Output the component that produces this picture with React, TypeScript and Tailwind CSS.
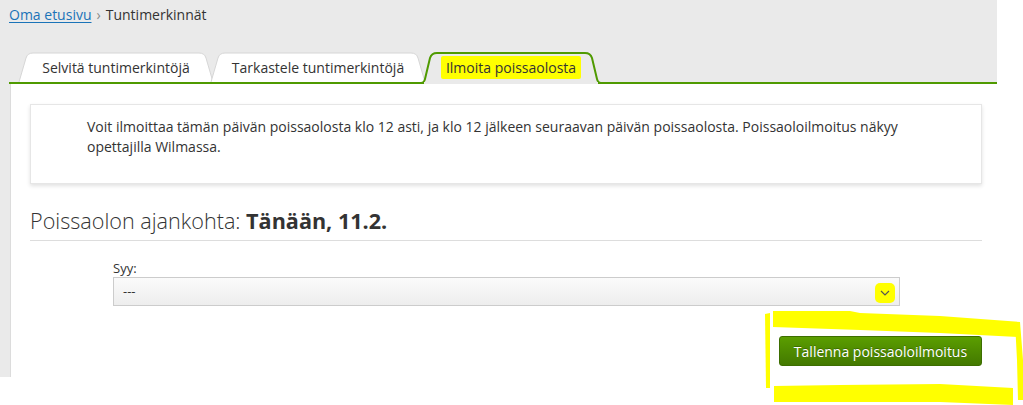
import React from "react";

const GREEN = "#4f9a00";

function Tab({
    label,
    width,
    active,
    className,
}: {
    label: React.ReactNode;
    width: number;
    active?: boolean;
    className?: string;
}) {
    const h = active ? 32 : 30;
    const w = width;
    // trapezoid with rounded top corners
    const d = `M1,${h} L8,6 Q9.5,1 15,1 L${w - 15},1 Q${w - 9.5},1 ${w - 8},6 L${w - 1},${h}`;
    return (
        <div
            className={`relative flex items-center justify-center text-[14px] text-[#333] ${className ?? ""}`}
            style={{ width: w, height: h }}
        >
            <svg className="absolute inset-0" width={w} height={h} viewBox={`0 0 ${w} ${h}`}>
                {active ? (
                    <path
                        d={`M0,${h - 1} L1,${h - 1} Q4,${h - 1} 5,${h - 5} L10,6 Q11.5,1 17,1 L${w - 17},1 Q${w - 11.5},1 ${w - 10},6 L${w - 5},${h - 5} Q${w - 4},${h - 1} ${w - 1},${h - 1} L${w},${h - 1} L${w},${h} L0,${h} Z`}
                        fill="#eaeaea"
                        stroke={GREEN}
                        strokeWidth={2}
                    />
                ) : (
                    <path d={d} fill="#ffffff" stroke="#d6d6d6" strokeWidth={1} />
                )}
                {active && <rect x={4} y={h - 2} width={w - 8} height={2} fill="#eaeaea" />}
            </svg>
            <span className={`relative ${active ? "-mt-[2px]" : ""}`}>{label}</span>
        </div>
    );
}

export default function App() {
    return (
        <div className="relative w-[1023px] h-[405px] bg-white overflow-hidden font-['Open_Sans',sans-serif] text-[#333]">
            <div className="w-[997px] h-[377px] bg-[#eaeaea] flex flex-col">
                {/* breadcrumb */}
                <div className="h-[53px] pl-[9px] pt-[5px] text-[14px] leading-[20px]">
                    <a href="#" className="text-[#1a73b8] underline underline-offset-2">Oma etusivu</a>
                    <span className="text-[#888] mx-[5px]">›</span>
                    <span className="text-[#333]">Tuntimerkinnät</span>
                </div>

                {/* tabs */}
                <div className="ml-[9px] pl-[9px] h-[31px] flex items-end border-b-2 border-[#4f9a00]">
                    <Tab label="Selvitä tuntimerkintöjä" width={196} />
                    <Tab label="Tarkastele tuntimerkintöjä" width={216} className="-ml-[4px]" />
                    <Tab
                        active
                        width={182}
                        className="-ml-[6px] -mb-[2px]"
                        label={
                            <span className="bg-[#ffff00] px-[5px] py-[2px] rounded-[2px]">Ilmoita poissaolosta</span>
                        }
                    />
                </div>

                {/* content */}
                <div className="flex-1 ml-[10px] bg-white border-l border-[#dcdcdc] pl-[19px] pr-[15px] pt-[20px]">
                    <div className="h-[80px] bg-white border border-[#e6e6e6] shadow-[0_2px_4px_rgba(0,0,0,0.12)] pl-[56px] pr-[60px] pt-[12px] text-[14px] leading-[20px] text-[#333]">
                        Voit ilmoittaa tämän päivän poissaolosta klo 12 asti, ja klo 12 jälkeen seuraavan päivän poissaolosta. Poissaoloilmoitus näkyy opettajilla Wilmassa.
                    </div>

                    <div className="mt-[22px] pb-[4px] border-b border-[#dddddd] text-[21.6px] leading-[30px] text-[#333]">
                        <span className="font-light">Poissaolon ajankohta: </span>
                        <span className="font-bold">Tänään, 11.2.</span>
                    </div>

                    <div className="ml-[83px] mt-[18px] w-[787px]">
                        <div className="text-[13px] leading-[18px] text-[#333]">Syy:</div>
                        <div className="relative h-[29px] border border-[#cccccc] bg-gradient-to-b from-[#fbfbfb] to-[#ededed] flex items-center pl-[9px] text-[13px] text-[#333]">
                            <span>---</span>
                            <div className="absolute right-[4px] top-[5px] w-[20px] h-[20px] bg-[#ffff00] rounded-[5px] flex items-center justify-center">
                                <svg width="10" height="6" viewBox="0 0 10 6">
                                    <path d="M1,1 L5,5 L9,1" fill="none" stroke="#555" strokeWidth="1.2" />
                                </svg>
                            </div>
                        </div>
                    </div>

                    <div className="flex justify-end mt-[30px]">
                        <button className="h-[30px] w-[203px] rounded-[3px] border border-[#3d6e00] bg-gradient-to-b from-[#5b9e00] to-[#437900] text-white text-[14px] [text-shadow:0_-1px_0_rgba(0,0,0,0.25)]">
                            Tallenna poissaoloilmoitus
                        </button>
                    </div>
                </div>
            </div>

            {/* hand-drawn yellow annotation */}
            <svg className="absolute left-0 top-0 pointer-events-none" width="1023" height="405" viewBox="0 0 1023 405">
                <path d="M773,311 L850,311 L860,313 L940,316 L1020,322 L1020,337 L940,333 L860,330 L773,327 Z" fill="#ffff00" />
                <path d="M765,314 L770,313 L770,388 L766,388 Z" fill="#ffff00" />
                <path d="M774,386 L840,385 L940,384 L1013,388 L1013,405 L940,402 L840,402 L774,402 Z" fill="#ffff00" />
                <path d="M1015,322 L1020,322 L1023,360 L1023,400 L1018,400 L1017,360 Z" fill="#ffff00" />
            </svg>
        </div>
    );
}
